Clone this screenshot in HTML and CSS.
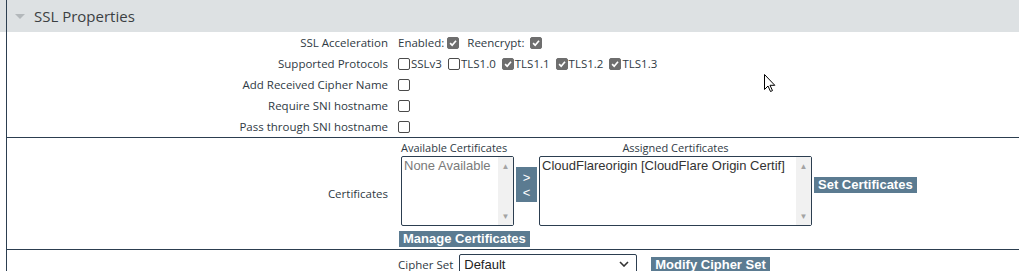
FILE: index.html
```html
<!DOCTYPE html>
<html>
<head>
  <title>SSL Properties</title>
  <link rel="stylesheet" href="styles.css">
</head>
<body>
  <div class="section-head">
    <div class="head-inner">
      <span class="caret"></span>
      <span class="head-title">SSL Properties</span>
    </div>
  </div>

  <div class="section-body">
    <div class="group">
      <div class="row">
        <div class="row-label">SSL Acceleration</div>
        <div class="row-value">
          <span class="opt-text">Enabled:</span>
          <span class="cb on"><svg viewBox="0 0 12 12"><path d="M2.5 6.2 L5 8.6 L9.6 3.2" /></svg></span>
          <span class="opt-text spaced">Reencrypt:</span>
          <span class="cb on"><svg viewBox="0 0 12 12"><path d="M2.5 6.2 L5 8.6 L9.6 3.2" /></svg></span>
        </div>
      </div>
      <div class="row">
        <div class="row-label">Supported Protocols</div>
        <div class="row-value protocols">
          <span class="proto"><span class="cb"></span>SSLv3</span>
          <span class="proto"><span class="cb"></span>TLS1.0</span>
          <span class="proto"><span class="cb on"><svg viewBox="0 0 12 12"><path d="M2.5 6.2 L5 8.6 L9.6 3.2" /></svg></span>TLS1.1</span>
          <span class="proto"><span class="cb on"><svg viewBox="0 0 12 12"><path d="M2.5 6.2 L5 8.6 L9.6 3.2" /></svg></span>TLS1.2</span>
          <span class="proto"><span class="cb on"><svg viewBox="0 0 12 12"><path d="M2.5 6.2 L5 8.6 L9.6 3.2" /></svg></span>TLS1.3</span>
        </div>
      </div>
      <div class="row">
        <div class="row-label">Add Received Cipher Name</div>
        <div class="row-value"><span class="cb"></span></div>
      </div>
      <div class="row">
        <div class="row-label">Require SNI hostname</div>
        <div class="row-value"><span class="cb"></span></div>
      </div>
      <div class="row">
        <div class="row-label">Pass through SNI hostname</div>
        <div class="row-value"><span class="cb"></span></div>
      </div>
    </div>

    <div class="group certs">
      <div class="row">
        <div class="row-label">Certificates</div>
        <div class="row-value cert-value">
          <div class="cert-grid">
            <div class="list-col">
              <div class="list-title">Available Certificates</div>
              <div class="listbox avail">
                <div class="list-items muted">None Available</div>
                <div class="scroll"><span class="arr">&#9650;</span><span class="arr">&#9660;</span></div>
              </div>
            </div>
            <div class="move-btn"><span>&gt;</span><span>&lt;</span></div>
            <div class="list-col">
              <div class="list-title center">Assigned Certificates</div>
              <div class="listbox assigned">
                <div class="list-items">CloudFlareorigin [CloudFlare Origin Certif]</div>
                <div class="scroll"><span class="arr">&#9650;</span><span class="arr">&#9660;</span></div>
              </div>
            </div>
            <div class="btn set-btn">Set Certificates</div>
          </div>
          <div class="btn manage-btn">Manage Certificates</div>
        </div>
      </div>
    </div>

    <div class="group last">
      <div class="row">
        <div class="row-label"></div>
        <div class="row-value">
          <span class="cipher-label">Cipher Set</span>
          <div class="select">
            <span>Default</span>
            <svg class="chev" viewBox="0 0 10 6"><path d="M1 1 L5 5 L9 1" /></svg>
          </div>
          <div class="btn modify-btn">Modify Cipher Set</div>
        </div>
      </div>
    </div>
  </div>

  <svg class="cursor" viewBox="0 0 12 19"><path d="M0.5 0.5 L0.5 15.5 L4 12 L6.5 17.5 L8.5 16.6 L6 11.3 L10.8 11.3 Z" /></svg>
</body>
</html>
```

FILE: styles.css
```css
body {
  margin: 0;
  font-family: "Open Sans", Arial, sans-serif;
  font-size: 11.5px;
  color: #2f3a44;
  background: #ffffff;
  position: relative;
  overflow: hidden;
  height: 271px;
}

.section-head {
  background-color: #dde1e3;
  padding-left: 6px;
  height: 32px;
}

.head-inner {
  border-left: 1px solid #2c3e50;
  height: 32px;
  display: flex;
  align-items: center;
}

.caret {
  width: 0;
  height: 0;
  border-left: 5px solid transparent;
  border-right: 5px solid transparent;
  border-top: 5px solid #b3b8bb;
  margin-left: 8px;
  margin-right: 9px;
  margin-top: 1px;
}

.head-title {
  font-size: 15px;
  color: #3b3f42;
}

.section-body {
  margin-left: 6px;
  border-left: 1px solid #2c3e50;
}

.group {
  border-bottom: 1px solid #2c3e50;
}

.group.last {
  border-bottom: none;
}

.row {
  display: grid;
  grid-template-columns: 381px 1fr;
  column-gap: 10px;
  align-items: center;
  min-height: 21px;
}

.row-label {
  text-align: right;
}

.row-value {
  display: flex;
  align-items: center;
}

.opt-text {
  margin-right: 3px;
}

.opt-text.spaced {
  margin-left: 8px;
  margin-right: 5px;
}

.cb {
  display: inline-block;
  box-sizing: border-box;
  width: 12px;
  height: 12px;
  border: 1px solid #4a4a4a;
  border-radius: 2px;
  background: #ffffff;
  flex: 0 0 auto;
}

.cb.on {
  background: #6e6e6e;
  border-color: #6e6e6e;
}

.cb svg {
  display: block;
  width: 10px;
  height: 10px;
}

.cb svg path {
  fill: none;
  stroke: #ffffff;
  stroke-width: 2;
}

.protocols .proto {
  display: inline-flex;
  align-items: center;
  margin-right: 6px;
}

.proto .cb {
  margin-right: 1px;
}

/* certificates block */
.certs .row {
  height: 111px;
}

.cert-value {
  flex-direction: column;
  align-items: flex-start;
  align-self: start;
  padding-top: 2px;
}

.cert-grid {
  display: flex;
  align-items: flex-start;
  margin-left: 3px;
}

.list-col {
  display: flex;
  flex-direction: column;
}

.list-title {
  font-size: 11px;
  line-height: 15px;
  margin-bottom: 1px;
}

.list-title.center {
  text-align: center;
}

.listbox {
  display: flex;
  box-sizing: border-box;
  height: 70px;
  border: 1px solid #2c3e50;
  border-radius: 2px;
  font-family: "Liberation Sans", Arial, sans-serif;
  font-size: 13px;
  background: #ffffff;
}

.listbox.avail {
  width: 113px;
}

.listbox.assigned {
  width: 273px;
}

.list-items {
  flex: 1;
  padding: 1px 2px;
  color: #333333;
  white-space: nowrap;
  overflow: hidden;
}

.list-items.muted {
  color: #7a7a7a;
}

.scroll {
  width: 15px;
  background: #f1f1f1;
  display: flex;
  flex-direction: column;
  justify-content: space-between;
  align-items: center;
  color: #a3a3a3;
  font-size: 8px;
  padding: 5px 0 4px;
}

.move-btn {
  display: flex;
  flex-direction: column;
  justify-content: center;
  align-items: center;
  width: 21px;
  height: 35px;
  margin: 27px 2px 0 2px;
  background: #5b7b91;
  color: #ffffff;
  font-family: "Liberation Sans", Arial, sans-serif;
  font-size: 13px;
  line-height: 15px;
}

.btn {
  background: #5b7b91;
  color: #ffffff;
  font-family: "Liberation Sans", Arial, sans-serif;
  font-weight: bold;
  font-size: 13px;
  line-height: 16px;
  padding: 0 4px;
  white-space: nowrap;
}

.set-btn {
  margin-left: 2px;
  margin-top: 37px;
}

.manage-btn {
  margin-top: 5px;
  margin-left: 1px;
}

/* cipher row */
.cipher-label {
  margin-right: 6px;
  margin-top: 5px;
}

.select {
  display: flex;
  align-items: center;
  justify-content: space-between;
  box-sizing: border-box;
  width: 178px;
  height: 20px;
  margin-top: 4px;
  padding: 0 7px 0 4px;
  border: 1px solid #2c3e50;
  border-radius: 2px;
  font-family: "Liberation Sans", Arial, sans-serif;
  font-size: 13px;
  color: #222222;
}

.chev {
  width: 10px;
  height: 6px;
}

.chev path {
  fill: none;
  stroke: #333333;
  stroke-width: 1.6;
}

.modify-btn {
  margin-left: 14px;
  margin-top: 5px;
}

.cursor {
  position: absolute;
  left: 764px;
  top: 74px;
  width: 12px;
  height: 19px;
}

.cursor path {
  fill: #ffffff;
  stroke: #000000;
  stroke-width: 1;
}
```
